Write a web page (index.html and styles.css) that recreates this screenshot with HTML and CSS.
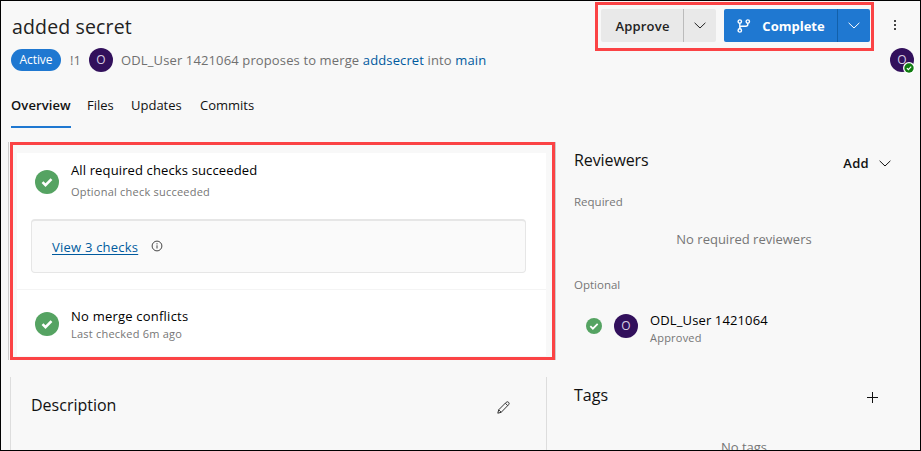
FILE: index.html
```html
<!DOCTYPE html>
<html lang="en">
<head>
<meta charset="utf-8">
<title>added secret</title>
<link rel="stylesheet" href="styles.css">
</head>
<body>
<div class="page">
  <header class="header">
    <div class="heading">
      <h1 class="title"><span>added secret</span></h1>
      <div class="meta">
        <span class="badge"><span>Active</span></span>
        <span class="number">!1</span>
        <span class="avatar">O</span>
        <span class="summary">ODL_User 1421064 proposes to merge <a>addsecret</a> into <a>main</a></span>
      </div>
    </div>
    <div class="side">
      <div class="actions">
        <div class="split">
          <button class="label approve">Approve</button>
          <button class="drop"><svg width="12" height="7" viewBox="0 0 12 7"><path d="M.6.8 6 6 11.4.8"/></svg></button>
        </div>
        <div class="split primary">
          <button class="label"><svg class="branch" width="14" height="14" viewBox="0 0 14 14"><circle cx="2.8" cy="2.6" r="1.7"/><circle cx="10.8" cy="2.6" r="1.7"/><circle cx="2.8" cy="11.4" r="1.7"/><path d="M2.8 4.3v5.4M10.8 4.3v.9q0 2-2 2H4.8q-2 0-2 2"/></svg>Complete</button>
          <button class="drop"><svg width="12" height="7" viewBox="0 0 12 7"><path d="M.6.8 6 6 11.4.8"/></svg></button>
        </div>
        <svg class="more" width="4" height="12" viewBox="0 0 4 12"><path d="M1 1h2v2H1zM1 5h2v2H1zM1 9h2v2H1z"/></svg>
      </div>
      <span class="avatar self">O<svg class="vote" width="12" height="12" viewBox="0 0 12 12"><circle class="ring" cx="6" cy="6" r="6"/><circle cx="6" cy="6" r="4.7"/><path d="m3.9 6.1 1.5 1.5 2.8-2.9"/></svg></span>
    </div>
  </header>

  <nav class="tabs">
    <a class="tab active">Overview</a><a class="tab files">Files</a><a class="tab updates">Updates</a><a class="tab commits">Commits</a>
  </nav>

  <main class="columns">
    <div class="primary-column">
      <section class="status">
        <div class="check required">
          <svg class="tick" width="24" height="24" viewBox="0 0 24 24"><circle cx="12" cy="12" r="12"/><path d="m7.5 12.2 3 3 6-6"/></svg>
          <div class="lines"><div class="name all">All required checks succeeded</div><div class="note optional">Optional check succeeded</div></div>
        </div>
        <div class="checks">
          <a>View 3 checks</a>
          <svg width="12" height="12" viewBox="0 0 12 12"><circle cx="6" cy="6" r="4.9"/><path d="M6 5.3v3.2M6 3.2v1.2"/></svg>
        </div>
        <div class="check conflicts">
          <svg class="tick" width="24" height="24" viewBox="0 0 24 24"><circle cx="12" cy="12" r="12"/><path d="m7.5 12.2 3 3 6-6"/></svg>
          <div><div class="name none">No merge conflicts</div><div class="note ago">Last checked 6m ago</div></div>
        </div>
      </section>
      <section class="description">
        <h2>Description</h2>
        <svg width="13" height="13" viewBox="0 0 13 13"><path d="m.8 12.2.9-3.4 7.5-7.5q1.3-1.1 2.4 0 1.1 1.1 0 2.4L4.2 11.3zM8.3 2.2l2.5 2.5M1.7 8.8l2.5 2.5"/></svg>
      </section>
    </div>

    <aside class="sidebar">
      <div class="section-head">
        <h2 class="reviewers">Reviewers</h2>
        <button class="add">Add <svg width="12" height="7" viewBox="0 0 12 7"><path d="M.6.8 6 6 11.4.8"/></svg></button>
      </div>
      <h3>Required</h3>
      <p class="empty">No required reviewers</p>
      <h3>Optional</h3>
      <div class="reviewer">
        <svg class="tick" width="16" height="16" viewBox="0 0 24 24"><circle cx="12" cy="12" r="12"/><path d="m6.5 12.2 3.8 3.8 7.2-7.2"/></svg>
        <span class="avatar">O</span>
        <div class="person"><div class="name user">ODL_User 1421064</div><div class="note approved">Approved</div></div>
      </div>
      <div class="section-head tags">
        <h2>Tags</h2>
        <svg width="11" height="11" viewBox="0 0 11 11"><path d="M5.5 0v11M0 5.5h11"/></svg>
      </div>
      <p class="empty no-tags">No tags</p>
    </aside>
  </main>
  <div class="marker marker-actions"></div>
  <div class="marker marker-status"></div>
</div>
</body>
</html>
```
FILE: styles.css
```css
* { box-sizing: border-box; }
body { margin: 0; }
h1, h2, h3, p { margin: 0; font-weight: 400; }
svg { display: block; flex: none; fill: none; stroke: currentColor; }
button { display: flex; align-items: center; padding: 0; border: 0; background: none; color: inherit; font: inherit; letter-spacing: inherit; }

.page {
  position: relative;
  width: 921px;
  height: 451px;
  overflow: hidden;
  border: 1px solid #000;
  background: #f8f8f8;
  color: #111;
  font: 13px/20px "Open Sans", "Noto Sans", sans-serif;
  white-space: nowrap;
}

.header { display: flex; justify-content: space-between; height: 83px; padding-left: 10px; }
.title { height: 46px; padding-top: 12px; font-size: 19.5px; line-height: 28px; letter-spacing: .15px; padding-left: 1px; color: #222; }
.meta { display: flex; align-items: center; height: 26px; color: #707070; }
.badge { width: 50px; height: 22px; border-radius: 11px; background: #1f78d1; color: #fff; font-size: 12px; line-height: 22px; text-align: center; letter-spacing: -.1px; }
.number { width: 28px; padding-left: 9px; }
.avatar { flex: none; width: 24px; height: 24px; border-radius: 50%; background: #32105c; color: #d8cfe2; font-size: 12px; line-height: 24px; text-align: center; }
.summary { padding-left: 8px; letter-spacing: .13px; }
.meta a { color: #005a9e; }

.side { display: flex; flex-direction: column; align-items: flex-end; }
.actions { display: flex; align-items: center; height: 46px; padding: 2px 23px 0 0; }
.split { display: flex; width: 115px; height: 33px; background: #e9e9e9; border-radius: 2px; color: #222; font-weight: 600; letter-spacing: .2px; overflow: hidden; }
.label { flex: 1; justify-content: center; padding: 2px 0 0 1px; }
.drop { justify-content: center; width: 33px; border-left: 1px solid #bbb; }
.primary { width: 146px; margin-left: 8px; background: #1f78d1; color: #fff; font-weight: 700; letter-spacing: 0; }
.primary .drop { border-color: #1260aa; }
.branch { margin: -1px 11px 0 0; stroke-width: 1.4; }
.more { margin: 0 0 0 23px; fill: #444; stroke: none; }
.self { position: relative; margin: 1px 6px 0 0; }
.vote { position: absolute; right: -1px; bottom: -2px; fill: #107c10; stroke: none; }
.vote .ring { fill: #fff; }
.vote path { fill: none; stroke: #fff; stroke-width: 1.2; }

.tabs { display: flex; height: 44px; padding-left: 10px; }
.tab { height: 44px; line-height: 43px; }
.tab.active { width: 60px; border-bottom: 2px solid #1f78d1; font-weight: 600; letter-spacing: .1px; }
.files { width: 44px; margin-left: 16px; }
.updates { width: 69px; }

.columns { display: flex; padding-top: 25px; }
.primary-column { width: 546px; }
.status { width: 529px; height: 203px; margin-left: 16px; padding: 6px 0 0 18px; background: #fff; }
.check { display: flex; align-items: center; gap: 12px; height: 46px; }
.required .lines { padding-bottom: 5px; }
.tick { fill: #55a362; stroke: none; }
.tick path { fill: none; stroke: #fff; stroke-width: 2.6; }
.name { line-height: 20px; color: #000; letter-spacing: .13px; }
.none { letter-spacing: .22px; }
.note { font-size: 11px; line-height: 16px; color: #767676; letter-spacing: .22px; }
.optional { margin-top: 4px; }
.checks { display: flex; align-items: center; gap: 13px; width: 495px; height: 54px; margin: 14px 0 16px -4px; padding-left: 20px; border: 1px solid #e6e6e6; border-top-width: 2px; border-radius: 4px; background: #fafafa; color: #444; }
.checks a { color: #005a9e; text-decoration: underline; text-underline-offset: 2px; letter-spacing: .22px; }
.checks svg { margin-top: -2px; }
.conflicts { width: 529px; height: 68px; margin-left: -18px; padding-left: 18px; border-top: 1px solid #f4f4f4; }
.description { display: flex; justify-content: space-between; width: 537px; height: 80px; margin: 21px 0 0 9px; padding: 16px 36px 0 20px; border: solid #ddd; border-width: 0 1px; }
.description svg { margin-top: 8px; stroke: #333; }
h2 { font-size: 16px; line-height: 24px; color: #111; }
.reviewers { letter-spacing: -.1px; }

.sidebar { width: 317px; margin-left: 27px; }
.section-head { display: flex; justify-content: space-between; align-items: flex-start; height: 37px; }
.section-head h2 { margin-top: -5px; }
.add { height: 20px; gap: 10px; font-weight: 600; letter-spacing: .3px; }
h3 { font-size: 11.5px; line-height: 24px; color: #767676; }
.empty { margin: 15px 0 24px; padding-left: 23px; text-align: center; line-height: 20px; color: #767676; }
.reviewer { display: flex; align-items: center; height: 38px; margin: 10px 0 0 12px; }
.reviewer .avatar { margin: 0 12px; }
.person { padding-top: 4px; }
.tags { height: 49px; margin-top: 43px; padding-right: 13px; }
.tags svg { margin-top: 4px; }
.no-tags { margin: 0; padding-left: 23px; }

.marker { position: absolute; border: 3px solid #fb4345; pointer-events: none; }
.marker-actions { left: 594px; top: 1px; width: 279px; height: 49px; }
.marker-status { left: 9px; top: 141px; width: 545px; height: 218px; box-shadow: 1px 0 #ccc, -1px 0 #f8f8f8, -2px 0 #ccc; }
```
